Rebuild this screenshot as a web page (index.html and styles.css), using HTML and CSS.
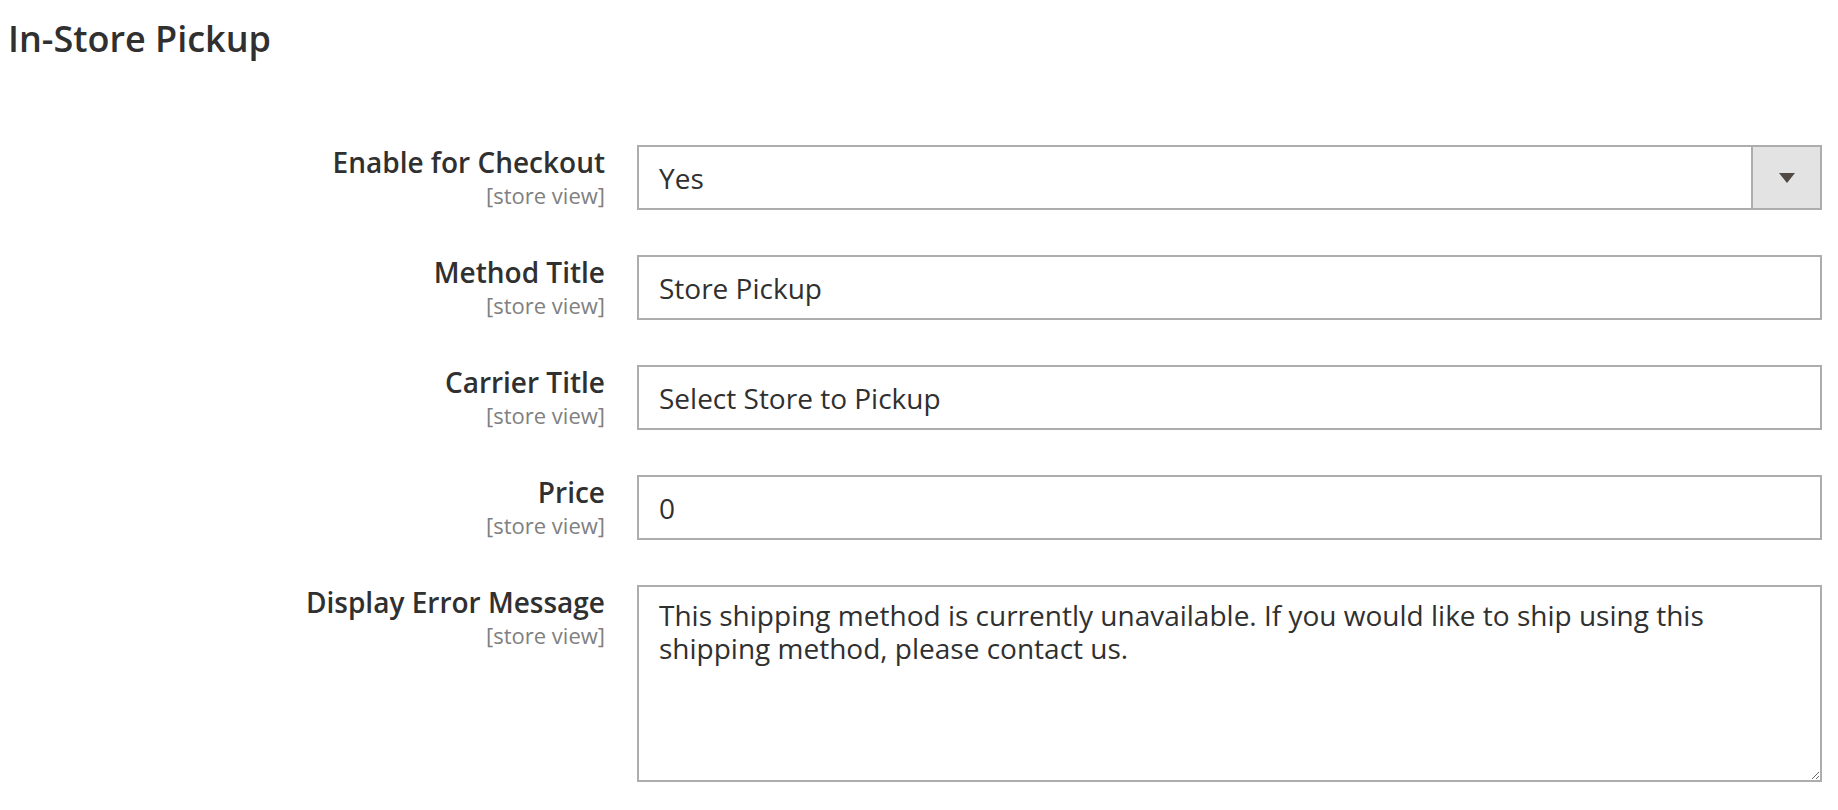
FILE: index.html
```html
<!DOCTYPE html>
<html lang="en">
<head>
    <meta charset="UTF-8">
    <meta name="viewport" content="width=device-width, initial-scale=1.0">
    <title>In-Store Pickup</title>
    <link rel="stylesheet" href="styles.css">
</head>
<body>
    <div class="section">
        <h2 class="section-title">In-Store Pickup</h2>

        <div class="fields">
            <div class="field-row">
                <label class="field-label" for="enable">
                    <span class="label-text">Enable for Checkout</span>
                    <span class="scope">[store view]</span>
                </label>
                <div class="control">
                    <div class="select-wrap">
                        <select id="enable" class="select">
                            <option selected>Yes</option>
                            <option>No</option>
                        </select>
                        <span class="select-btn"><span class="arrow"></span></span>
                    </div>
                </div>
            </div>

            <div class="field-row">
                <label class="field-label" for="method-title">
                    <span class="label-text">Method Title</span>
                    <span class="scope">[store view]</span>
                </label>
                <div class="control">
                    <input type="text" id="method-title" class="input-text" value="Store Pickup">
                </div>
            </div>

            <div class="field-row">
                <label class="field-label" for="carrier-title">
                    <span class="label-text">Carrier Title</span>
                    <span class="scope">[store view]</span>
                </label>
                <div class="control">
                    <input type="text" id="carrier-title" class="input-text" value="Select Store to Pickup">
                </div>
            </div>

            <div class="field-row">
                <label class="field-label" for="price">
                    <span class="label-text">Price</span>
                    <span class="scope">[store view]</span>
                </label>
                <div class="control">
                    <input type="text" id="price" class="input-text" value="0">
                </div>
            </div>

            <div class="field-row">
                <label class="field-label" for="error-msg">
                    <span class="label-text">Display Error Message</span>
                    <span class="scope">[store view]</span>
                </label>
                <div class="control">
                    <textarea id="error-msg" class="textarea">This shipping method is currently unavailable. If you would like to ship using this shipping method, please contact us.</textarea>
                </div>
            </div>
        </div>
    </div>
</body>
</html>
```

FILE: styles.css
```css
body {
    margin: 0;
    background: #ffffff;
    font-family: "Open Sans", "Liberation Sans", Arial, sans-serif;
    color: #303030;
}

.section {
    padding: 19px 16px 0 6px;
}

.section-title {
    margin: 0;
    padding-left: 2px;
    font-size: 36px;
    font-weight: 600;
    line-height: 40px;
    color: #303030;
}

.fields {
    margin-top: 86px;
}

.field-row {
    display: grid;
    grid-template-columns: 599px 1fr;
    align-items: start;
    column-gap: 32px;
    margin-bottom: 45px;
}

.field-label {
    display: flex;
    flex-direction: column;
    align-items: flex-end;
    text-align: right;
}

.label-text {
    margin-top: -2px;
    font-size: 28px;
    font-weight: 600;
    line-height: 38px;
    color: #303030;
}

.scope {
    font-size: 22px;
    line-height: 29px;
    color: #808080;
}

.control {
    min-width: 0;
}

.input-text,
.textarea,
.select {
    font-family: inherit;
    font-size: 28px;
    color: #303030;
}

.input-text {
    display: block;
    width: 100%;
    height: 65px;
    box-sizing: border-box;
    border: 2px solid #adadad;
    border-radius: 0;
    padding: 0 20px;
    outline: none;
}

.select-wrap {
    display: flex;
    height: 65px;
    box-sizing: border-box;
    border: 2px solid #adadad;
}

.select {
    flex: 1;
    appearance: none;
    -webkit-appearance: none;
    border: none;
    background: #ffffff;
    padding: 0 20px;
    outline: none;
}

.select-btn {
    width: 67px;
    border-left: 2px solid #adadad;
    background: #e3e3e3;
    display: flex;
    align-items: center;
    justify-content: center;
}

.arrow {
    width: 0;
    height: 0;
    border-left: 8px solid transparent;
    border-right: 8px solid transparent;
    border-top: 10px solid #514943;
}

.textarea {
    display: block;
    width: 100%;
    height: 197px;
    box-sizing: border-box;
    border: 2px solid #adadad;
    border-radius: 0;
    padding: 12px 20px;
    line-height: 33px;
    resize: vertical;
    outline: none;
}
```
